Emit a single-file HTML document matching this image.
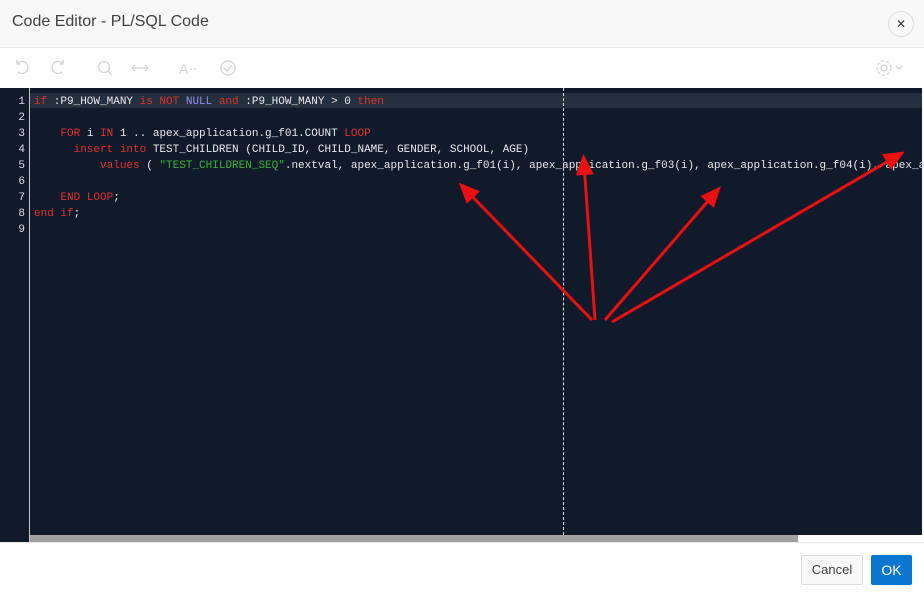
<!DOCTYPE html><html><head><style>
body{margin:0;width:924px;height:594px;position:relative;background:#fff;font-family:"Liberation Sans",sans-serif;overflow:hidden}
.hd{position:absolute;left:0;top:0;width:924px;height:47px;background:#f8f8f8;border-bottom:1px solid #e8e8e8}
.hd span{position:absolute;left:12px;top:13px;font-size:16px;color:#404040}
.x{position:absolute;left:888px;top:11px;width:24px;height:24px;border:1px solid #ddd;border-radius:50%;text-align:center;line-height:24px;font-size:12px;color:#333}
.ed{position:absolute;left:0;top:88px;width:922px;height:454px;background:#111a2b}
.gut{position:absolute;left:0;top:0;width:29px;height:454px;border-right:1px solid #c8c8c8}
.hl{position:absolute;left:30px;top:5px;width:892px;height:15px;background:#25303e}
pre{margin:0;position:absolute;top:6px;font-family:"Liberation Mono",monospace;font-size:11px;line-height:16px;color:#e8e8e8}
.ln{left:0;width:25px;text-align:right;color:#ddd}
.code{left:34px}
.k{color:#e0302a}.b{color:#8f8ff0}.s{color:#35b535}
.dl{position:absolute;left:563px;top:0;height:447px;border-left:1px dashed #ddd}
.sb{position:absolute;left:30px;top:447px;width:768px;height:7px;background:#a0a0a0}
.sb2{position:absolute;left:798px;top:447px;width:124px;height:7px;background:#fff}
.btn{position:absolute;top:555px;height:28px;line-height:28px;font-size:13px;text-align:center;border-radius:2px}
</style></head><body>
<div class="hd"><span>Code Editor - PL/SQL Code</span><div class="x">✕</div></div>
<svg style="position:absolute;left:0;top:47px" width="924" height="41" fill="none" stroke="#d4d4d4" stroke-width="1.3">
<path d="M17 17a6 6 0 1 1 1 8M17 13v4h4"/><path d="M63 17a6 6 0 1 0 -1 8M63 13v4h-4"/>
<circle cx="104" cy="20" r="5.5"/><path d="M108 24l4 4"/>
<path d="M132 21h16M135 18l-3 3 3 3M145 18l3 3-3 3"/>
<text x="179" y="27" fill="#d4d4d4" stroke="none" font-size="14" font-family="Liberation Sans">A</text><path d="M190 22h2M194 22h2"/>
<circle cx="228" cy="21" r="7"/><path d="M224 21l3 3 5-6"/>
<circle cx="884" cy="21" r="3"/><circle cx="884" cy="21" r="7" stroke-dasharray="3 2"/><path d="M896 19l3 3 3-3"/>
</svg>
<div class="ed"><div class="gut"></div><div class="hl"></div><div class="dl"></div>
<pre class="ln">1
2
3
4
5
6
7
8
9</pre>
<pre class="code"><span class="k">if</span> :P9_HOW_MANY <span class="k">is NOT</span> <span class="b">NULL</span> <span class="k">and</span> :P9_HOW_MANY &gt; 0 <span class="k">then</span>

    <span class="k">FOR</span> i <span class="k">IN</span> 1 .. apex_application.g_f01.COUNT <span class="k">LOOP</span>
      <span class="k">insert into</span> TEST_CHILDREN (CHILD_ID, CHILD_NAME, GENDER, SCHOOL, AGE)
          <span class="k">values</span> ( <span class="s">"TEST_CHILDREN_SEQ"</span>.nextval, apex_application.g_f01(i), apex_application.g_f03(i), apex_application.g_f04(i), apex_a

    <span class="k">END LOOP</span>;
<span class="k">end if</span>;
</pre>
<div class="sb"></div><div class="sb2"></div></div>
<svg style="position:absolute;left:0;top:0" width="924" height="594">
<defs><marker id="a" markerWidth="7" markerHeight="6" refX="4" refY="3" orient="auto"><path d="M0 0L7 3L0 6z" fill="#e81010"/></marker></defs>
<g stroke="#e81010" stroke-width="3" marker-end="url(#a)">
<line x1="592" y1="320" x2="465" y2="189"/><line x1="595" y1="320" x2="584" y2="163"/><line x1="605" y1="320" x2="715" y2="193"/><line x1="612" y1="322" x2="897" y2="156"/></g></svg>
<div style="position:absolute;left:0;top:542px;width:924px;height:1px;background:#e8e8e8"></div>
<div class="btn" style="left:801px;width:60px;background:#f8f8f8;border:1px solid #ddd;color:#404040">Cancel</div>
<div class="btn" style="left:871px;width:41px;height:30px;line-height:30px;background:#0a76d0;color:#fff;font-size:14px">OK</div>
</body></html>
